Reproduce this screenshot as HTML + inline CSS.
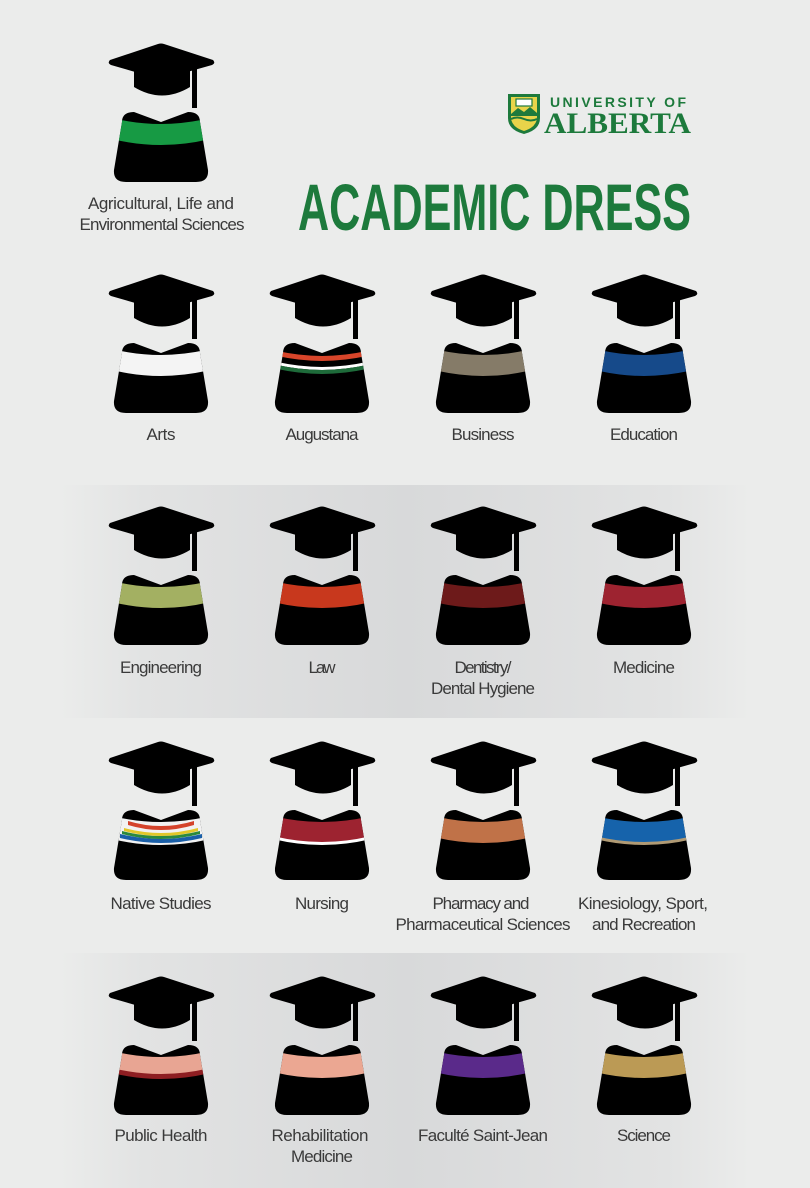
<!DOCTYPE html>
<html><head><meta charset="utf-8"><style>
html,body{margin:0;padding:0;background:#ebeceb;}
svg{display:block}
text{font-family:"Liberation Sans Narrow","Liberation Sans",sans-serif;}
</style></head><body>
<svg width="810" height="1188" viewBox="0 0 810 1188" xmlns="http://www.w3.org/2000/svg">
<defs>
<linearGradient id="pg" x1="0" x2="1" y1="0" y2="0">
<stop offset="0" stop-color="#ebeceb"/><stop offset="0.12" stop-color="#e2e3e3"/><stop offset="0.5" stop-color="#d8d9da"/><stop offset="0.88" stop-color="#e2e3e3"/><stop offset="1" stop-color="#ebeceb"/>
</linearGradient>
<g id="cap">
<path d="M2,18 L50,2 Q53,1 56,2 L105,18 Q108,21 104,23 L58,36 Q53,37 48,36 L3,23 Q-1,21 2,18 Z" fill="#000"/>
<path d="M26,26 L82,26 L82,45 Q54,62 26,45 Z" fill="#000"/>
<rect x="84" y="26" width="5" height="40" fill="#000"/>
</g>
<path id="gown" d="M14,80 Q14,70 26,70 L53,80 L80,70 Q92,70 92,80 L100,128 Q101,140 88,140 L18,140 Q5,140 6,128 Z"/>
<clipPath id="gc"><use href="#gown"/></clipPath>
</defs>
<rect width="810" height="1188" fill="#ebeceb"/>
<rect x="60" y="485" width="690" height="233" fill="url(#pg)"/>
<rect x="60" y="953" width="690" height="235" fill="url(#pg)"/>

<g>
<path d="M508,94 L540,94 L540,118 Q540,130 524,134 Q508,130 508,118 Z" fill="#1d7a3c"/>
<path d="M511,97 L537,97 L537,117 Q537,127 524,131 Q511,127 511,117 Z" fill="#e8d44a"/>
<rect x="516" y="99" width="16" height="7" fill="#fff" stroke="#1d7a3c" stroke-width="1.2"/>
<path d="M511,114 L518,108 L524,112 L530,107 L537,113 L537,116 L511,116 Z" fill="#1d7a3c"/>
<path d="M511,119 Q517,116 524,119 Q531,122 537,119" stroke="#1d7a3c" stroke-width="2" fill="none"/>
<text x="550" y="107" style="font-family:'Liberation Sans',sans-serif;font-weight:bold;font-size:14px;letter-spacing:2px" fill="#1d7a3c" textLength="138" lengthAdjust="spacing">UNIVERSITY OF</text>
<text x="544" y="133" style="font-family:'Liberation Serif',serif;font-size:30px;font-weight:bold" fill="#1d7a3c" textLength="147" lengthAdjust="spacingAndGlyphs">ALBERTA</text>
</g>
<text x="298" y="230" font-weight="bold" font-size="66" fill="#1d7a3c" textLength="393" lengthAdjust="spacingAndGlyphs">ACADEMIC DRESS</text>

<g transform="translate(108,42)"><use href="#cap"/><use href="#gown"/><g clip-path="url(#gc)"><path d="M0,75 Q53,89 106,75 L106,96 Q53,110 0,96 Z" fill="#179a44"/></g></g>

<g transform="translate(108,273)"><use href="#cap"/><use href="#gown"/><g clip-path="url(#gc)"><path d="M0,75 Q53,89 106,75 L106,96 Q53,110 0,96 Z" fill="#f4f4f4"/></g></g>
<g transform="translate(269,273)"><use href="#cap"/><use href="#gown"/><g clip-path="url(#gc)">
<path d="M0,76 Q53,90 106,76 L106,81 Q53,95 0,81 Z" fill="#d8452a"/>
<path d="M0,87 Q53,101 106,87 L106,90 Q53,104 0,90 Z" fill="#fff"/>
<path d="M0,90 Q53,104 106,90 L106,94 Q53,108 0,94 Z" fill="#1e6b3a"/></g></g>
<g transform="translate(430,273)"><use href="#cap"/><use href="#gown"/><g clip-path="url(#gc)"><path d="M0,75 Q53,89 106,75 L106,96 Q53,110 0,96 Z" fill="#857b68"/></g></g>
<g transform="translate(591,273)"><use href="#cap"/><use href="#gown"/><g clip-path="url(#gc)"><path d="M0,75 Q53,89 106,75 L106,96 Q53,110 0,96 Z" fill="#164a8a"/></g></g>

<g transform="translate(108,505)"><use href="#cap"/><use href="#gown"/><g clip-path="url(#gc)"><path d="M0,75 Q53,89 106,75 L106,96 Q53,110 0,96 Z" fill="#a3b062"/></g></g>
<g transform="translate(269,505)"><use href="#cap"/><use href="#gown"/><g clip-path="url(#gc)"><path d="M0,75 Q53,89 106,75 L106,96 Q53,110 0,96 Z" fill="#c8381d"/></g></g>
<g transform="translate(430,505)"><use href="#cap"/><use href="#gown"/><g clip-path="url(#gc)"><path d="M0,75 Q53,89 106,75 L106,96 Q53,110 0,96 Z" fill="#6d1a1a"/></g></g>
<g transform="translate(591,505)"><use href="#cap"/><use href="#gown"/><g clip-path="url(#gc)"><path d="M0,75 Q53,89 106,75 L106,96 Q53,110 0,96 Z" fill="#9d2330"/></g></g>

<g transform="translate(108,740)"><use href="#cap"/><use href="#gown"/><g clip-path="url(#gc)">
<path d="M0,75 Q53,89 106,75 L106,98 Q53,112 0,98 Z" fill="#f2f2f2"/>
<path d="M20,81 Q53,91 86,81 L86,85 Q53,95 20,85 Z" fill="#d4432b"/>
<path d="M16,88 Q53,98 90,88 L90,91 Q53,101 16,91 Z" fill="#e2c729"/>
<path d="M14,91 Q53,101 92,91 L92,94 Q53,104 14,94 Z" fill="#2c8a3c"/>
<path d="M12,94 Q53,104 94,94 L94,98 Q53,108 12,98 Z" fill="#1a5fa8"/></g></g>
<g transform="translate(269,740)"><use href="#cap"/><use href="#gown"/><g clip-path="url(#gc)"><path d="M0,75 Q53,89 106,75 L106,96 Q53,110 0,96 Z" fill="#9d2330"/><path d="M0,95 Q53,109 106,95 L106,98 Q53,112 0,98 Z" fill="#fff"/></g></g>
<g transform="translate(430,740)"><use href="#cap"/><use href="#gown"/><g clip-path="url(#gc)"><path d="M0,75 Q53,89 106,75 L106,96 Q53,110 0,96 Z" fill="#c07248"/></g></g>
<g transform="translate(591,740)"><use href="#cap"/><use href="#gown"/><g clip-path="url(#gc)"><path d="M0,75 Q53,89 106,75 L106,96 Q53,110 0,96 Z" fill="#1663ab"/><path d="M0,95 Q53,109 106,95 L106,98 Q53,112 0,98 Z" fill="#b09a74"/></g></g>

<g transform="translate(108,975)"><use href="#cap"/><use href="#gown"/><g clip-path="url(#gc)"><path d="M0,75 Q53,89 106,75 L106,96 Q53,110 0,96 Z" fill="#e8a593"/><path d="M0,92 Q53,106 106,92 L106,97 Q53,111 0,97 Z" fill="#8e1e22"/></g></g>
<g transform="translate(269,975)"><use href="#cap"/><use href="#gown"/><g clip-path="url(#gc)"><path d="M0,75 Q53,89 106,75 L106,96 Q53,110 0,96 Z" fill="#eba792"/></g></g>
<g transform="translate(430,975)"><use href="#cap"/><use href="#gown"/><g clip-path="url(#gc)"><path d="M0,75 Q53,89 106,75 L106,96 Q53,110 0,96 Z" fill="#5a2a8a"/></g></g>
<g transform="translate(591,975)"><use href="#cap"/><use href="#gown"/><g clip-path="url(#gc)"><path d="M0,75 Q53,89 106,75 L106,96 Q53,110 0,96 Z" fill="#bb9a55"/></g></g>

<g font-size="17" fill="#3a3a3a" text-anchor="middle" lengthAdjust="spacingAndGlyphs">
<text x="161" y="209" textLength="146">Agricultural, Life and</text>
<text x="162" y="230" textLength="165">Environmental Sciences</text>
<text x="161" y="440" textLength="29">Arts</text>
<text x="322" y="440" textLength="73">Augustana</text>
<text x="483" y="440" textLength="63">Business</text>
<text x="644" y="440" textLength="68">Education</text>
<text x="161" y="673" textLength="82">Engineering</text>
<text x="322" y="673" textLength="27">Law</text>
<text x="483" y="673" textLength="57">Dentistry/</text>
<text x="483" y="694" textLength="104">Dental Hygiene</text>
<text x="644" y="673" textLength="62">Medicine</text>
<text x="161" y="909" textLength="101">Native Studies</text>
<text x="322" y="909" textLength="54">Nursing</text>
<text x="481" y="909" textLength="97">Pharmacy and</text>
<text x="483" y="930" textLength="175">Pharmaceutical Sciences</text>
<text x="643" y="909" textLength="130">Kinesiology, Sport,</text>
<text x="644" y="930" textLength="104">and Recreation</text>
<text x="161" y="1141" textLength="93">Public Health</text>
<text x="320" y="1141" textLength="97">Rehabilitation</text>
<text x="322" y="1162" textLength="62">Medicine</text>
<text x="483" y="1141" textLength="130">Faculté Saint-Jean</text>
<text x="644" y="1141" textLength="54">Science</text>
</g>
</svg>
</body></html>
